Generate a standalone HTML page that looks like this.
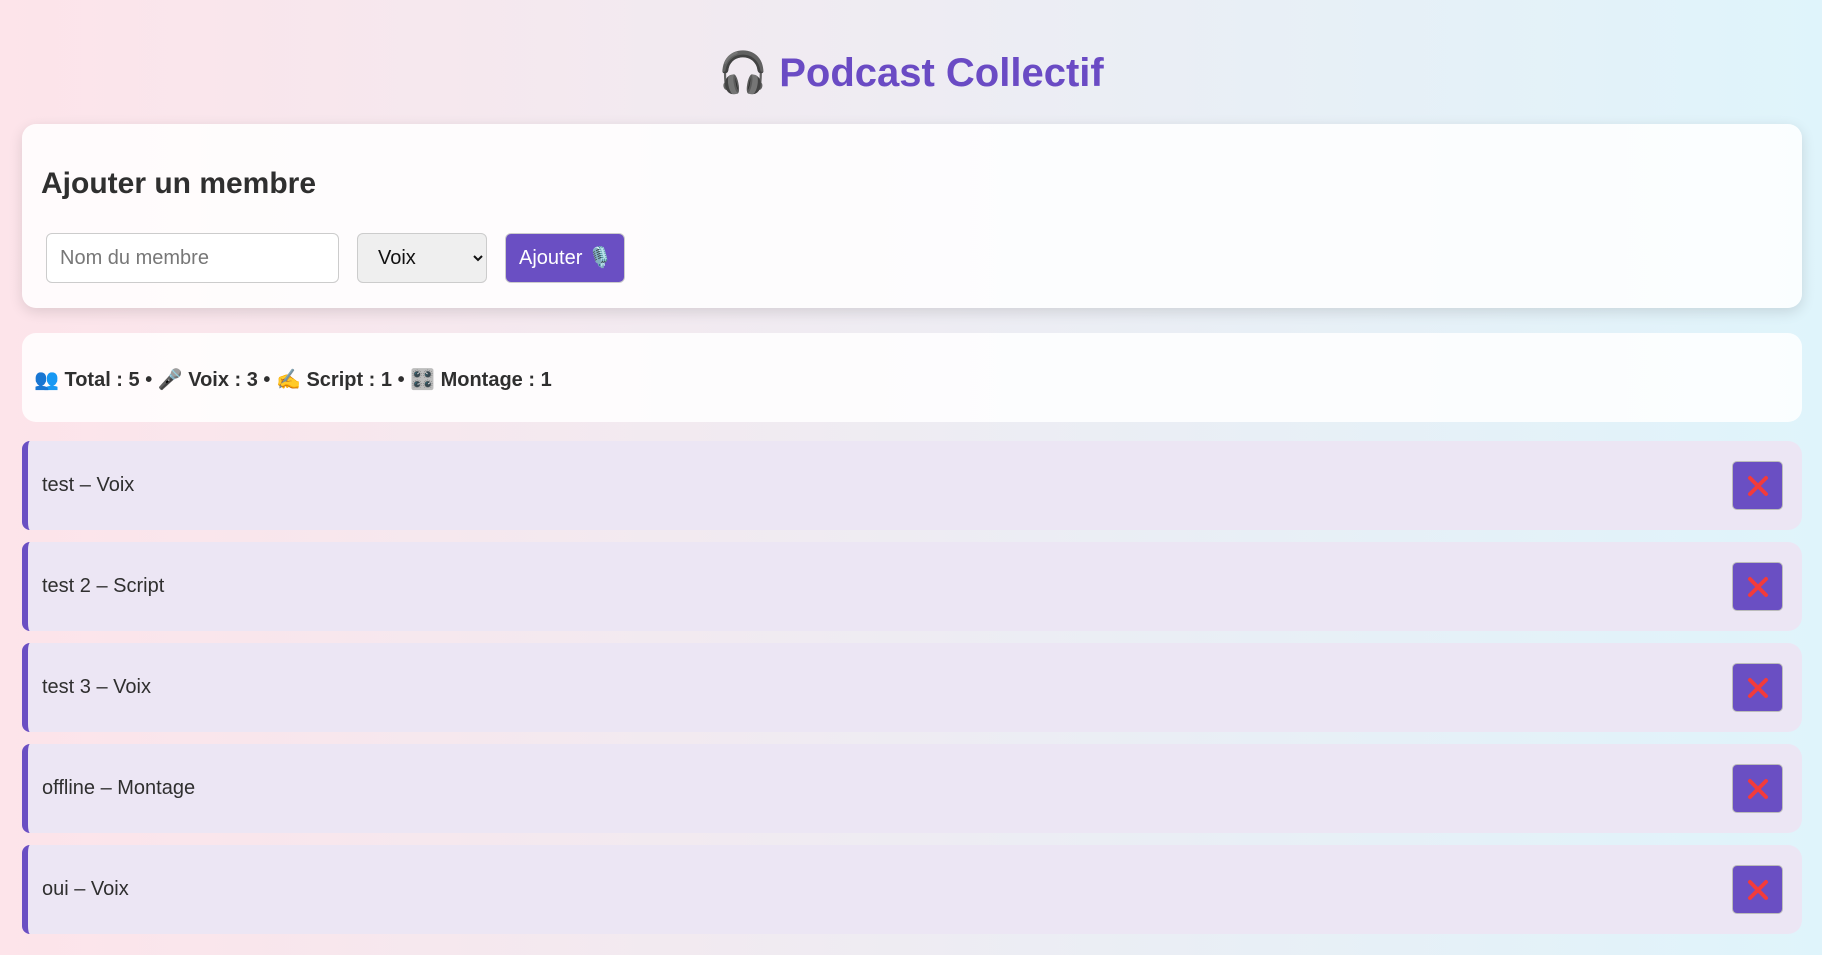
<!DOCTYPE html>
<html><head><meta charset="utf-8"><style>
*{box-sizing:border-box}
html,body{margin:0;height:955px;overflow:hidden}
body{font-family:"Liberation Sans","Noto Sans CJK JP",sans-serif;background:linear-gradient(90deg,#fde4ea,#dff4fb);color:#2f2f2f;padding:0 22px}
h1{margin:0;position:absolute;top:48px;left:0;width:1822px;text-align:center;font-size:40px;color:#6a4bc4;font-weight:bold;line-height:50px}
.card{position:absolute;left:22px;width:1780px;background:rgba(255,255,255,.85);border-radius:14px}
.c1{top:124px;height:184px;box-shadow:0 4px 14px rgba(0,0,0,.12)}
.c1 h2{position:absolute;left:19px;top:42px;margin:0;font-size:30px;line-height:36px}
input,select,.btn{position:absolute;top:109px;height:50px;font-size:20px;font-family:inherit;border-radius:6px;white-space:nowrap}
input{left:24px;width:293px;border:1px solid #ccc;background:#fff;padding:0 13px;color:#777}
select{left:335px;width:130px;border:1px solid #ccc;background:#efefef;padding:0 16px;color:#111}
.btn{left:483px;width:120px;background:#6a4fc3;color:#fff;border:1px solid #ccc;line-height:48px;padding-left:13px}
.c2{top:333px;height:89px}
.c2 div{position:absolute;left:12px;top:34px;font-size:20px;font-weight:bold}
.item{position:absolute;left:22px;width:1780px;height:89px;background:#ece6f4;border-left:6px solid #6a4fc3;border-radius:8px 14px 14px 8px}
.item span{position:absolute;left:14px;top:33px;font-size:20px}
.x{position:absolute;left:1704px;top:20px;width:51px;height:49px;background:#6a4fc3;border:1px solid #bbb;border-radius:5px}
</style></head><body>
<h1>🎧 Podcast Collectif</h1>
<div class="card c1"><h2>Ajouter un membre</h2>
<input value="Nom du membre"><select><option>Voix</option></select><div class="btn">Ajouter 🎙️</div></div>
<div class="card c2"><div>👥 Total : 5 • 🎤 Voix : 3 • ✍️ Script : 1 • 🎛️ Montage : 1</div></div>
<div class="item" style="top:441px"><span>test – Voix</span><div class="x"><svg width="51" height="49" viewBox="0 0 51 49"><path d="M17 16L33 32M33 16L17 32" stroke="#f33b3b" stroke-width="4" stroke-linecap="round"/></svg></div></div>
<div class="item" style="top:542px"><span>test 2 – Script</span><div class="x"><svg width="51" height="49" viewBox="0 0 51 49"><path d="M17 16L33 32M33 16L17 32" stroke="#f33b3b" stroke-width="4" stroke-linecap="round"/></svg></div></div>
<div class="item" style="top:643px"><span>test 3 – Voix</span><div class="x"><svg width="51" height="49" viewBox="0 0 51 49"><path d="M17 16L33 32M33 16L17 32" stroke="#f33b3b" stroke-width="4" stroke-linecap="round"/></svg></div></div>
<div class="item" style="top:744px"><span>offline – Montage</span><div class="x"><svg width="51" height="49" viewBox="0 0 51 49"><path d="M17 16L33 32M33 16L17 32" stroke="#f33b3b" stroke-width="4" stroke-linecap="round"/></svg></div></div>
<div class="item" style="top:845px"><span>oui – Voix</span><div class="x"><svg width="51" height="49" viewBox="0 0 51 49"><path d="M17 16L33 32M33 16L17 32" stroke="#f33b3b" stroke-width="4" stroke-linecap="round"/></svg></div></div>
</body></html>
